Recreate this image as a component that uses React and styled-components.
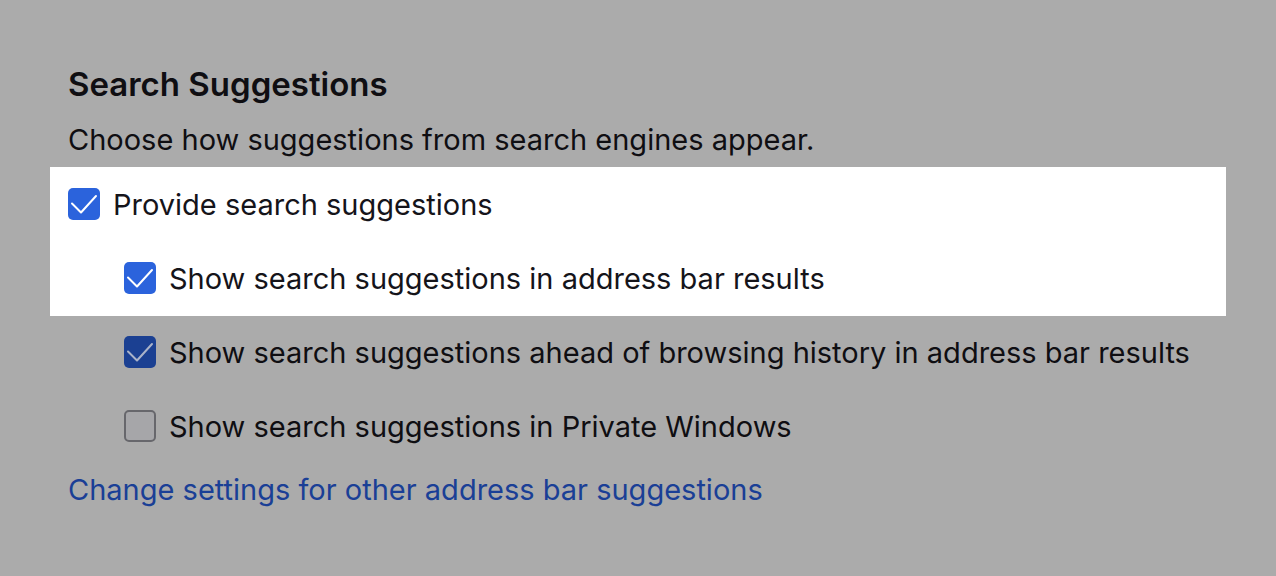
import React from "react";
import styled, { createGlobalStyle } from "styled-components";

const Global = createGlobalStyle`
  html, body { margin: 0; padding: 0; background: #ababab; }
  body { font-family: Inter, "Noto Sans", sans-serif; color: #0f0e12; }
`;

const Page = styled.div`
  width: 1276px;
  height: 576px;
  box-sizing: border-box;
  padding: 62px 0 0 68px;
  background: #ababab;
  overflow: hidden;
`;

const Heading = styled.h2`
  margin: 0;
  font-size: 33px;
  font-weight: 600;
  line-height: 44px;
  color: #0f0e12;
`;

const Description = styled.p`
  margin: 12px 0 0;
  font-size: 29px;
  line-height: 44px;
  color: #0f0e12;
`;

const Spotlight = styled.div`
  margin: 5px 0 -1px -18px;
  padding: 0 0 1px 18px;
  width: 1158px;
  background: #ffffff;
`;

const Row = styled.label`
  display: flex;
  align-items: center;
  gap: 13px;
  height: 74px;
  padding-left: ${(p) => (p.$nested ? 56 : 0)}px;
  font-size: 29px;
  color: ${(p) => (p.$lit ? "#15141a" : "#0f0e12")};
`;

const Box = styled.span`
  box-sizing: border-box;
  width: 32px;
  height: 32px;
  flex: none;
  border-radius: 5px;
  display: flex;
  background: ${(p) =>
    p.$checked ? (p.$lit ? "#2b63dc" : "#1b4092") : "#a6a6a9"};
  border: ${(p) => (p.$checked ? "none" : "2px solid #67676c")};
`;

const Link = styled.a`
  display: inline-block;
  margin-top: 7px;
  font-size: 29px;
  line-height: 40px;
  color: #1a3f96;
  text-decoration: none;
`;

function Check({ checked, lit }) {
  return (
    <Box $checked={checked} $lit={lit}>
      {checked && (
        <svg width="32" height="32" viewBox="0 0 32 32">
          <polyline
            points="4,15.5 13,24.5 28,8"
            fill="none"
            stroke={lit ? "#ffffff" : "#aab3c9"}
            strokeWidth="2"
            strokeLinecap="round"
            strokeLinejoin="round"
          />
        </svg>
      )}
    </Box>
  );
}

export default function App() {
  return (
    <Page>
      <Global />
      <Heading>Search Suggestions</Heading>
      <Description>Choose how suggestions from search engines appear.</Description>
      <Spotlight>
        <Row $lit>
          <Check checked lit />
          Provide search suggestions
        </Row>
        <Row $lit $nested>
          <Check checked lit />
          Show search suggestions in address bar results
        </Row>
      </Spotlight>
      <Row $nested>
        <Check checked />
        Show search suggestions ahead of browsing history in address bar results
      </Row>
      <Row $nested>
        <Check />
        Show search suggestions in Private Windows
      </Row>
      <Link href="#">Change settings for other address bar suggestions</Link>
    </Page>
  );
}
